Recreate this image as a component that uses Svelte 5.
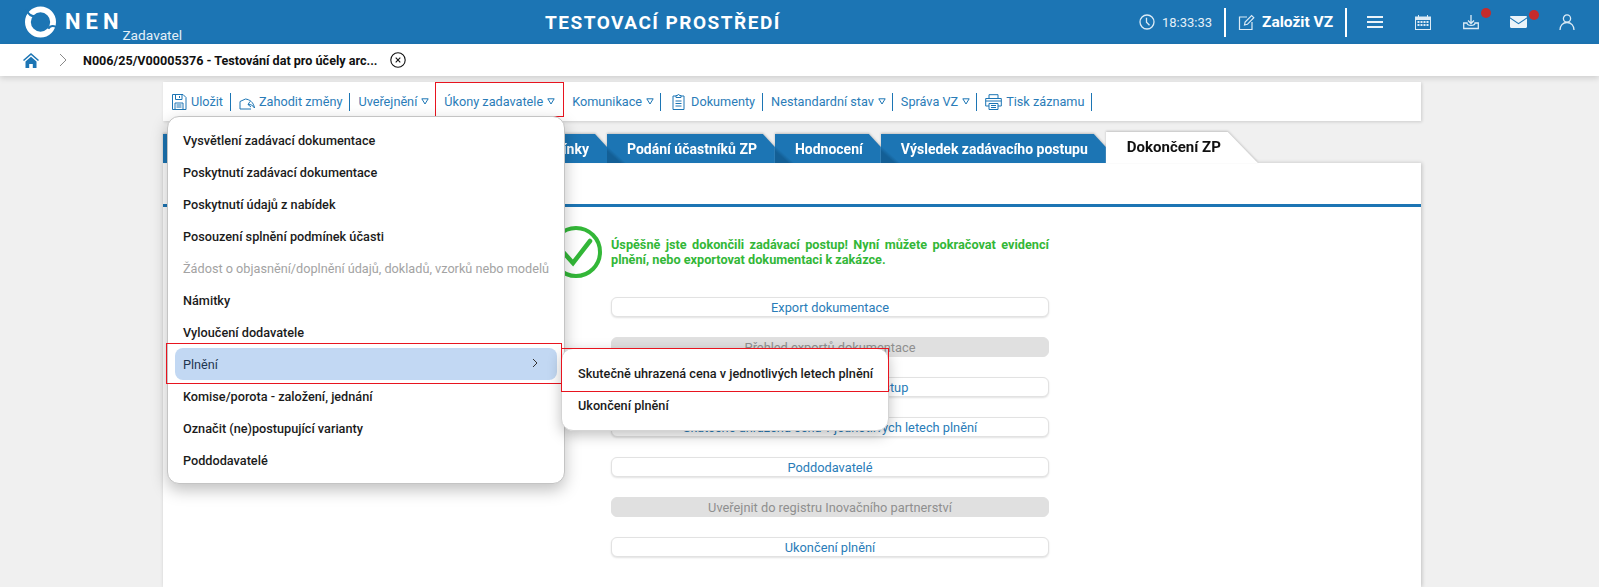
<script>
	const tools = [
		{ label: 'Uložit', icon: 'save' },
		{ label: 'Zahodit změny', icon: 'undo' },
		{ label: 'Uveřejnění', drop: true },
		{ label: 'Úkony zadavatele', drop: true, flagged: true, plain: true },
		{ label: 'Komunikace', drop: true },
		{ label: 'Dokumenty', icon: 'clip' },
		{ label: 'Nestandardní stav', drop: true },
		{ label: 'Správa VZ', drop: true },
		{ label: 'Tisk záznamu', icon: 'print' }
	]
	const tabs = ['Podání účastníků ZP', 'Hodnocení', 'Výsledek zadávacího postupu']
	const menu = [
		{ label: 'Vysvětlení zadávací dokumentace' },
		{ label: 'Poskytnutí zadávací dokumentace' },
		{ label: 'Poskytnutí údajů z nabídek' },
		{ label: 'Posouzení splnění podmínek účasti' },
		{ label: 'Žádost o objasnění/doplnění údajů, dokladů, vzorků nebo modelů', off: true },
		{ label: 'Námitky' },
		{ label: 'Vyloučení dodavatele' },
		{ label: 'Plnění', open: true },
		{ label: 'Komise/porota - založení, jednání' },
		{ label: 'Označit (ne)postupující varianty' },
		{ label: 'Poddodavatelé' }
	]
	const actions = [
		{ label: 'Export dokumentace' },
		{ label: 'Přehled exportů dokumentace', off: true },
		{ label: 'Zkopírovat zadávací postup' },
		{ label: 'Skutečně uhrazená cena v jednotlivých letech plnění' },
		{ label: 'Poddodavatelé' },
		{ label: 'Uveřejnit do registru Inovačního partnerství', off: true },
		{ label: 'Ukončení plnění' }
	]
</script>

<div class="page">
	<header class="top">
		<div class="brand">
			<svg class="logo" viewBox="0 0 32 32" fill="none">
				<circle cx="16" cy="16" r="13" stroke="#fff" stroke-width="6" />
				<path d="M1 3C4 9 7 10.500 11 10" stroke="#1c75b4" stroke-width="2.200" />
				<path d="M32 21c-3-1.500-6-1-8 2" stroke="#1c75b4" stroke-width="2.200" />
			</svg>
			<span class="nen">NEN</span>
			<span class="role">Zadavatel</span>
		</div>
		<div class="env">TESTOVACÍ PROSTŘEDÍ</div>
		<div class="tools">
			<svg class="ico clock" viewBox="0 0 16 16" fill="none" stroke="#dcebf6" stroke-width="1.300"><circle cx="8" cy="8" r="7" /><path d="M7.500 3.800v4.400l3 3" /></svg>
			<span class="time">18:33:33</span>
			<span class="bar"></span>
			<svg class="ico pen" viewBox="0 0 17 17" fill="none" stroke="#dcebf6" stroke-width="1.200"><path d="M9 3H1.500v12.500H14V8" /><path d="M6.500 11l.6-3L13.600 1.500l2.200 2.200L9.400 10.300z" /></svg>
			<span class="create">Založit VZ</span>
			<span class="bar"></span>
			<svg class="ico burger" viewBox="0 0 16 14" fill="#eaf3f9"><rect width="16" height="2" y="1" /><rect width="16" height="2" y="6" /><rect width="16" height="2" y="11" /></svg>
			<svg class="ico cal" viewBox="0 0 16 16" fill="#dcebf6"><path d="M0 2.500h3V1h1v1.500h8V1h1v1.500h3V16H0zM1 6v9h14V6z" /><path d="M2.500 7h2v2h-2zM5.500 7h2v2h-2zM8.500 7h2v2h-2zM11.500 7h2v2h-2zM2.500 10h2v2h-2zM5.500 10h2v2h-2zM8.500 10h2v2h-2zM11.500 10h2v2h-2z" /></svg>
			<span class="dotted">
				<svg class="ico" viewBox="0 0 16 16" fill="none" stroke="#dcebf6" stroke-width="1.300"><path d="M8 1v8M5 6.500L8 9.500l3-3" /><path d="M4 9H.7v5.500h14.600V9H12c0 1.600-1.500 2.400-4 2.400S4 10.600 4 9z" /></svg>
				<i></i>
			</span>
			<span class="dotted mail">
				<svg class="ico" viewBox="0 0 17 12" fill="#eaf3f9"><path d="M0 1.200C0 .5.500 0 1.200 0h14.600c.7 0 1.200.5 1.200 1.200L8.500 7z" /><path d="M0 2.500v8.300c0 .7.500 1.200 1.200 1.200h14.600c.7 0 1.200-.5 1.200-1.200V2.500L8.500 8.200z" /></svg>
				<i></i>
			</span>
			<svg class="ico user" viewBox="0 0 16 16" fill="none" stroke="#dcebf6" stroke-width="1.300"><circle cx="8" cy="4.500" r="3.600" /><path d="M1 16c0-4.200 2.800-7.500 7-7.500s7 3.300 7 7.500" /></svg>
		</div>
	</header>

	<nav class="crumbs">
		<svg class="home" viewBox="0 0 16 15" fill="#1c75b4"><path d="M8 0L0 7l1 1 7-6 7 6 1-1z" /><path d="M2.500 8.500L8 3.800l5.500 4.700V15H9.800v-4H6.200v4H2.500z" /></svg>
		<svg class="chev" viewBox="0 0 8 14" fill="none" stroke="#8a8a8a"><path d="M1 1l6 6-6 6" /></svg>
		<span class="crumb">N006/25/V00005376 - Testování dat pro účely arc...</span>
		<svg class="close" viewBox="0 0 16 16" fill="none" stroke="#111" stroke-width="1.100"><circle cx="8" cy="8" r="7.200" /><path d="M5.700 5.700l4.600 4.600M10.300 5.700l-4.600 4.600" /></svg>
	</nav>

	<main class="main">
		<div class="toolbar">
			{#each tools as t}
				<span class="tool" class:flagged={t.flagged} class:plain={t.plain} class:drop={t.drop}>
					{#if t.icon === 'save'}
						<svg class="tico" viewBox="0 0 16 18" fill="none" stroke="#1c75b4"><path d="M1.500 1.500h10.500l3 3v12h-13.500z" /><path d="M4.500 1.500v5h6.500v-5M8.500 3v2M4 16.500v-6.500h8v6.500M5.500 12h5M5.500 14h5" /></svg>
					{:else if t.icon === 'undo'}
						<svg class="tico wide" viewBox="0 0 17 13" fill="none" stroke="#1c75b4"><path d="M1 12V4.500l5.500-2.500c4 .5 8 3 9 9-1.500-2.500-4-4-6.500-3.500" /><path d="M11 4.500l-2 3 3 2.500M1 12h11" /></svg>
					{:else if t.icon === 'clip'}
						<svg class="tico clip" viewBox="0 0 13 17" fill="none" stroke="#1c75b4"><path d="M4 3H1v13.500h11V3H9" /><path d="M4 4.500V2.500h1.500a1 1 0 012 0H9v2zM3.500 8h6M3.500 10.500h6M3.500 13h6" /></svg>
					{:else if t.icon === 'print'}
						<svg class="tico print" viewBox="0 0 17 16" fill="none" stroke="#1c75b4"><path d="M4 4V.7h9V4M4 12H.7V4.500h15.600V12H13" /><path d="M4 9.500h9v6H4zM.7 7h15.600M6 11.500h5M6 13.500h5" /></svg>
					{/if}
					{t.label}
					{#if t.drop}
						<svg class="tri" viewBox="0 0 8 7" fill="none" stroke="#1c75b4"><path d="M.8.800h6.400L4 6z" /></svg>
					{/if}
				</span>
			{/each}
		</div>

		<div class="tabs">
			<div class="tab first">ínky</div>
			{#each tabs as t}
				<div class="tab">{t}</div>
			{/each}
			<div class="tab active">Dokončení ZP</div>
		</div>

		<section class="panel">
			<div class="rule"></div>
			<div class="result">
				<svg class="ok" viewBox="0 0 52 52" fill="none" stroke="#33b738" stroke-width="4"><circle cx="26" cy="26" r="24" /><path d="M14 27l9 10 17-22" stroke-width="4.500" stroke-linecap="round" /></svg>
				<p>Úspěšně jste dokončili zadávací postup! Nyní můžete pokračovat evidencí plnění, nebo exportovat dokumentaci k zakázce.</p>
			</div>
			<div class="actions">
				{#each actions as a}
					<button class:off={a.off}>{a.label}</button>
				{/each}
			</div>
		</section>

		<ul class="menu">
			{#each menu as m}
				<li class:off={m.off} class:open={m.open}>
					{m.label}
					{#if m.open}
						<svg class="more" viewBox="0 0 6 10" fill="none" stroke="#333"><path d="M1 1l4 4-4 4" /></svg>
						<ul class="sub">
							<li class="picked">Skutečně uhrazená cena v jednotlivých letech plnění</li>
							<li>Ukončení plnění</li>
						</ul>
					{/if}
				</li>
			{/each}
		</ul>
	</main>
</div>

<style>
	:global(body) {
		background: #f0f0f0;
		overflow: hidden;
	}
	.page {
		font-family: Roboto, "Liberation Sans", sans-serif;
		font-size: 12.700px;
		height: 587px;
		overflow: hidden;
	}
	.top {
		height: 44px;
		background: #1c75b4;
		color: #fff;
		display: flex;
		align-items: center;
	}
	.brand {
		width: 545px;
		height: 44px;
		padding-left: 25px;
		box-sizing: border-box;
		display: flex;
		align-items: flex-start;
	}
	.logo {
		width: 31px;
		height: 32px;
		margin-top: 6px;
	}
	.nen {
		font-size: 22px;
		font-weight: 700;
		letter-spacing: 5px;
		margin: 9px 0 0 9px;
		line-height: 25px;
	}
	.role {
		font-size: 13.700px;
		line-height: 16px;
		margin: 27px 0 0 -1px;
		color: #e4f0f8;
	}
	.env {
		width: 237px;
		font-size: 19px;
		font-weight: 700;
		letter-spacing: 1.500px;
		white-space: nowrap;
	}
	.tools {
		display: flex;
		align-items: center;
		margin-left: 357px;
	}
	.ico {
		display: block;
		width: 16px;
		height: 16px;
		flex: none;
	}
	.clock { margin-right: 7px; }
	.time {
		font-size: 13px;
		color: #e4f0f8;
		width: 50px;
	}
	.bar {
		width: 2px;
		height: 29px;
		background: #fff;
		margin: 0 12px;
	}
	.pen { width: 17px; height: 17px; }
	.create {
		font-size: 15.500px;
		font-weight: 700;
		margin-left: 7px;
		width: 71px;
		white-space: nowrap;
	}
	.burger { margin: 0 32px 0 8px; }
	.cal { margin-right: 32px; }
	.dotted {
		position: relative;
		width: 16px;
		margin-right: 31px;
	}
	.dotted.mail { margin-right: 32px; width: 17px; }
	.mail .ico { width: 17px; height: 12px; }
	.dotted i {
		position: absolute;
		top: -6px;
		right: -12px;
		width: 10px;
		height: 10px;
		border-radius: 50%;
		background: #c62b2b;
	}
	.crumbs {
		height: 32px;
		background: #fff;
		box-shadow: 0 2px 6px rgba(0, 0, 0, .15);
		display: flex;
		align-items: center;
		padding-left: 23px;
		position: relative;
	}
	.home { width: 16px; height: 15px; }
	.chev { width: 8px; height: 14px; margin-left: 20px; }
	.crumb {
		font-weight: 700;
		font-size: 12.600px;
		color: #111;
		margin-left: 16px;
		width: 307px;
		white-space: nowrap;
	}
	.close { width: 16px; height: 16px; }
	.main {
		position: relative;
		width: 1258px;
		margin-left: 163px;
		padding-top: 6px;
	}
	.toolbar {
		height: 39px;
		background: #fff;
		box-shadow: 1px 1px 3px rgba(0, 0, 0, .15);
		display: flex;
		align-items: center;
		padding-left: 8px;
	}
	.tool {
		position: relative;
		display: flex;
		align-items: center;
		height: 18px;
		padding-right: 7px;
		margin-right: 8px;
		border-right: 1px solid #1c75b4;
		color: #2a7cb8;
		white-space: nowrap;
	}
	.tool.drop {
		padding-right: 6px;
	}
	.tool.plain {
		border-right: 0;
		padding-right: 0;
		margin-right: 17px;
	}
	.tool.flagged::after {
		content: "";
		position: absolute;
		left: -9px;
		right: -9px;
		top: -11px;
		bottom: -6px;
		border: 1px solid #e8141f;
	}
	.tico {
		width: 16px;
		height: 18px;
		margin-right: 4px;
	}
	.tico.wide { width: 17px; height: 13px; margin-right: 3px; margin-top: 3px; }
	.tico.clip { width: 13px; height: 17px; margin: 0 6px 0 3px; }
	.tico.print { width: 17px; height: 16px; }
	.tri {
		width: 8px;
		height: 7px;
		margin-left: 4px;
	}
	.tabs {
		display: flex;
		margin-top: 11px;
		height: 31px;
		align-items: flex-end;
		filter: drop-shadow(0 -1px 1px rgba(0, 0, 0, .2));
	}
	.tab {
		position: relative;
		height: 29px;
		box-sizing: border-box;
		background: linear-gradient(42deg, #135f96 0, #135f96 9px, #1c75b4 13px);
		color: #fff;
		font-weight: 700;
		font-size: 14px;
		line-height: 31px;
		padding: 0 18px 0 20px;
		white-space: nowrap;
		clip-path: polygon(0 0, calc(100% - 12px) 0, 100% 13px, 100% 100%, 0 100%);
	}
	.tab.first {
		width: 444px;
		flex: none;
		background: #1c75b4;
		text-align: right;
		padding-right: 18px;
	}
	.tab.active {
		height: 31px;
		width: 152px;
		flex: none;
		background: #fff;
		color: #111;
		font-size: 15px;
		line-height: 31px;
		padding: 0 0 0 21px;
		clip-path: polygon(0 0, 122px 0, 152px 100%, 0 100%);
	}
	.panel {
		height: 424px;
		background: #fff;
		box-shadow: 1px 0 4px rgba(0, 0, 0, .2);
		padding-top: 41px;
		box-sizing: border-box;
	}
	.rule {
		height: 3px;
		background: #1c75b4;
	}
	.result {
		display: flex;
		align-items: center;
		gap: 9px;
		margin: 19px 0 0 387px;
		width: 499px;
	}
	.ok {
		width: 52px;
		height: 52px;
		flex: none;
	}
	.result p {
		margin: 0;
		color: #33b738;
		font-size: 12.700px;
		font-weight: 700;
		line-height: 15px;
		text-align: justify;
	}
	.actions {
		display: flex;
		flex-direction: column;
		gap: 20px;
		width: 438px;
		margin: 19px 0 0 448px;
	}
	button {
		height: 20px;
		padding: 0;
		border: 1px solid #e2e2e2;
		border-radius: 6px;
		background: #fff;
		box-shadow: 0 1px 2px rgba(0, 0, 0, .12);
		color: #2a7cb8;
		font: 12.800px Roboto, "Liberation Sans", sans-serif;
	}
	button.off {
		background: #e0e0e0;
		border-color: #e0e0e0;
		box-shadow: none;
		color: #8f8f8f;
	}
	ul {
		list-style: none;
		margin: 0;
	}
	.menu {
		position: absolute;
		left: 4px;
		top: 40px;
		width: 398px;
		box-sizing: border-box;
		padding: 7px 7px;
		background: #fff;
		border: 1px solid #c4c4c4;
		border-radius: 12px;
		box-shadow: 0 6px 16px rgba(0, 0, 0, .25);
	}
	.menu li {
		position: relative;
		height: 32px;
		line-height: 33px;
		padding-left: 8px;
		font-weight: 500;
		color: #1b1b1b;
		white-space: nowrap;
	}
	.menu li.off {
		font-weight: 400;
		color: #a3a3a3;
	}
	.menu li.open {
		background: #c2d8f3;
		border-radius: 8px;
		color: #1f3550;
		font-weight: 400;
	}
	.menu li.open::after {
		content: "";
		position: absolute;
		left: -9px;
		right: -5px;
		top: -5px;
		bottom: -4px;
		border: 1px solid #e8141f;
		pointer-events: none;
	}
	.more {
		position: absolute;
		right: 19px;
		top: 10px;
		width: 6px;
		height: 10px;
	}
	.menu .sub {
		position: absolute;
		z-index: 2;
		left: 386px;
		top: 0;
		width: 328px;
		box-sizing: border-box;
		padding: 9px 0 8px;
		background: #fff;
		border: 1px solid #d4d4d4;
		border-radius: 12px;
		box-shadow: 0 4px 14px rgba(0, 0, 0, .25);
	}
	.menu .sub li {
		padding-left: 16px;
		line-height: 32px;
		color: #1b1b1b;
		font-weight: 500;
	}
	.menu .sub li.picked::after {
		content: "";
		position: absolute;
		left: -1px;
		right: -1px;
		top: -10px;
		bottom: -2px;
		border: 1px solid #e8141f;
	}
</style>
